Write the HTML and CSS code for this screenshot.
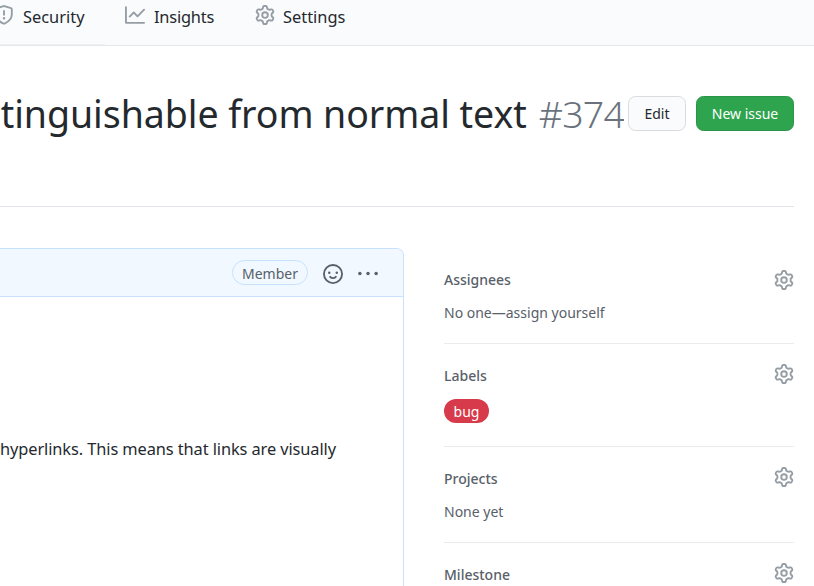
FILE: index.html
```html
<!DOCTYPE html>
<html lang="en">
<head>
<meta charset="utf-8">
<title>Issue #374</title>
<link rel="stylesheet" href="styles.css">
</head>
<body>
<svg class="defs" aria-hidden="true">
  <symbol id="gear" viewBox="0 0 16 16"><path fill-rule="evenodd" d="M7.429 1.525a6.593 6.593 0 011.142 0c.036.003.108.036.137.146l.289 1.105c.147.56.55.967.997 1.189.174.086.341.183.501.29.417.278.97.423 1.53.27l1.102-.303c.11-.03.175.016.195.046.219.31.41.641.573.989.014.031.022.11-.059.19l-.815.806c-.411.406-.562.957-.53 1.456a4.588 4.588 0 010 .582c-.032.499.119 1.05.53 1.456l.815.806c.08.08.073.159.059.19a6.494 6.494 0 01-.573.99c-.02.029-.086.074-.195.045l-1.103-.303c-.559-.153-1.112-.008-1.529.27-.16.107-.327.204-.5.29-.449.222-.851.628-.998 1.189l-.289 1.105c-.029.11-.101.143-.137.146a6.613 6.613 0 01-1.142 0c-.036-.003-.108-.037-.137-.146l-.289-1.105c-.147-.56-.55-.967-.997-1.189a4.502 4.502 0 01-.501-.29c-.417-.278-.97-.423-1.53-.27l-1.102.303c-.11.03-.175-.016-.195-.046a6.492 6.492 0 01-.573-.989c-.014-.031-.022-.11.059-.19l.815-.806c.411-.406.562-.957.53-1.456a4.587 4.587 0 010-.582c.032-.499-.119-1.05-.53-1.456l-.815-.806c-.08-.08-.073-.159-.059-.19a6.44 6.44 0 01.573-.99c.02-.029.086-.075.195-.045l1.103.303c.559.153 1.112.008 1.529-.27.16-.107.327-.204.5-.29.449-.222.851-.628.998-1.189l.289-1.105c.029-.11.101-.143.137-.146zM8 0c-.236 0-.47.01-.701.03-.743.065-1.29.615-1.458 1.261l-.29 1.106c-.017.066-.078.158-.211.224a5.994 5.994 0 00-.668.386c-.123.082-.233.09-.3.071L3.27 2.776c-.644-.177-1.392.02-1.82.63a7.977 7.977 0 00-.704 1.217c-.315.675-.111 1.422.363 1.891l.815.806c.05.048.098.147.088.294a6.084 6.084 0 000 .772c.01.147-.038.246-.088.294l-.815.806c-.474.469-.678 1.216-.363 1.891.2.428.436.835.704 1.218.428.609 1.176.806 1.82.63l1.103-.303c.066-.019.176-.011.299.071.213.143.436.272.668.386.133.066.194.158.212.224l.289 1.106c.169.646.715 1.196 1.458 1.26a8.094 8.094 0 001.402 0c.743-.064 1.29-.614 1.458-1.26l.29-1.106c.017-.066.078-.158.211-.224a5.98 5.98 0 00.668-.386c.123-.082.233-.09.3-.071l1.102.302c.644.177 1.392-.02 1.82-.63.268-.382.505-.789.704-1.217.315-.675.111-1.422-.364-1.891l-.814-.806c-.05-.048-.098-.147-.088-.294a6.1 6.1 0 000-.772c-.01-.147.039-.246.088-.294l.814-.806c.475-.469.679-1.216.364-1.891a7.992 7.992 0 00-.704-1.218c-.428-.609-1.176-.806-1.82-.63l-1.103.303c-.066.019-.176.011-.299-.071a5.991 5.991 0 00-.668-.386c-.133-.066-.194-.158-.212-.224L10.16 1.29C9.99.645 9.444.095 8.701.031A8.094 8.094 0 008 0zm1.5 8a1.5 1.5 0 11-3 0 1.5 1.5 0 013 0zM11 8a3 3 0 11-6 0 3 3 0 016 0z"/></symbol>
</svg>

<nav class="tabs">
  <a class="tab tab-first">
    <svg class="icon" viewBox="0 0 16 16"><path fill-rule="evenodd" d="M7.467.133a1.75 1.75 0 011.066 0l5.25 1.68A1.75 1.75 0 0115 3.48V7c0 1.566-.32 3.182-1.303 4.682-.983 1.498-2.585 2.813-5.032 3.855a1.7 1.7 0 01-1.33 0c-2.447-1.042-4.049-2.357-5.032-3.855C1.32 10.182 1 8.566 1 7V3.48a1.75 1.75 0 011.217-1.667l5.25-1.68zm.61 1.429a.25.25 0 00-.153 0l-5.25 1.68a.25.25 0 00-.174.238V7c0 1.358.275 2.666 1.057 3.86.784 1.194 2.121 2.34 4.366 3.297a.2.2 0 00.154 0c2.245-.956 3.582-2.104 4.366-3.298C13.225 9.666 13.5 8.36 13.5 7V3.48a.25.25 0 00-.174-.237l-5.25-1.68zM9 10.5a1 1 0 11-2 0 1 1 0 012 0zm-.25-5.75a.75.75 0 10-1.5 0v3a.75.75 0 001.5 0v-3z"/></svg>
    <span>Security</span>
  </a>
  <a class="tab tab-insights">
    <svg class="icon" viewBox="0 0 16 16"><path fill-rule="evenodd" d="M1.5 1.75a.75.75 0 00-1.5 0v12.5c0 .414.336.75.75.75h14.5a.75.75 0 000-1.5H1.5V1.75zm14.28 2.53a.75.75 0 00-1.06-1.06L10 7.94 7.53 5.47a.75.75 0 00-1.06 0L3.22 8.72a.75.75 0 001.06 1.06L7 7.06l2.47 2.47a.75.75 0 001.06 0l5.25-5.25z"/></svg>
    <span>Insights</span>
  </a>
  <a class="tab tab-settings">
    <svg class="icon"><use href="#gear"/></svg>
    <span>Settings</span>
  </a>
</nav>

<main>
  <header class="issue-header">
    <h1 class="title"><span class="title-text">stinguishable from normal text</span><span class="number">#374</span></h1>
    <button class="btn btn-edit">Edit</button>
    <button class="btn btn-new">New issue</button>
  </header>

  <div class="columns">
    <article class="comment">
      <div class="comment-header">
        <span class="role">Member</span>
        <svg class="icon smiley" viewBox="0 0 16 16"><path fill-rule="evenodd" d="M1.5 8a6.5 6.5 0 1113 0 6.5 6.5 0 01-13 0zM8 0a8 8 0 100 16A8 8 0 008 0zM5 8a1 1 0 100-2 1 1 0 000 2zm7-1a1 1 0 11-2 0 1 1 0 012 0zM5.32 9.636a.75.75 0 011.038.175l.007.009c.103.118.22.222.35.31.264.178.683.37 1.285.37.602 0 1.02-.192 1.285-.371.13-.088.247-.192.35-.31l.007-.008a.75.75 0 111.222.87c-.2.28-.45.5-.735.68-.63.418-1.37.638-2.127.629-.946 0-1.652-.308-2.126-.63a3.331 3.331 0 01-.715-.657.75.75 0 01.183-1.044z"/></svg>
        <svg class="icon dots" viewBox="0 0 16 16"><circle cx="1.5" cy="7.5" r="1.4"/><circle cx="8" cy="7.5" r="1.4"/><circle cx="14.5" cy="7.5" r="1.4"/></svg>
      </div>
      <p class="comment-body">hyperlinks. This means that links are visually</p>
    </article>

    <aside class="sidebar">
      <section class="item assignees">
        <h2><span>Assignees</span><svg class="icon"><use href="#gear"/></svg></h2>
        <p>No one—assign yourself</p>
      </section>
      <section class="item labels">
        <h2><span>Labels</span><svg class="icon"><use href="#gear"/></svg></h2>
        <span class="label">bug</span>
      </section>
      <section class="item projects">
        <h2><span>Projects</span><svg class="icon"><use href="#gear"/></svg></h2>
        <p>None yet</p>
      </section>
      <section class="item milestone">
        <h2><span>Milestone</span><svg class="icon"><use href="#gear"/></svg></h2>
      </section>
    </aside>
  </div>
</main>
</body>
</html>
```
FILE: styles.css
```css
* { box-sizing: border-box; }
html, body { height: 100%; }
body {
  margin: 0;
  overflow: hidden;
  background: #fff;
  color: #24292e;
  font-family: "Noto Sans", "Open Sans", sans-serif;
}
h1, h2, p { margin: 0; font-weight: 400; }
.defs { display: none; }
.icon { display: block; flex: none; width: 20px; height: 20px; fill: #959da5; }

.tabs {
  display: flex;
  height: 46px;
  padding: 5px 0 0;
  margin-left: -6px;
  background: #fafbfc;
  border-bottom: 1px solid #e4e7eb;
  font-size: 16.4px;
  line-height: 24px;
}
.tab { display: flex; gap: 9px; height: 40px; white-space: nowrap; }
.tab-first { width: 111px; border-bottom: 1px solid #eef0f2; }
.tab-insights { width: 110px; margin-left: 20px; letter-spacing: -0.2px; }
.tab-settings { margin-left: 20px; gap: 8px; letter-spacing: 0; }

.issue-header {
  display: flex;
  height: 161px;
  padding-top: 50px;
  margin-right: 20px;
  border-bottom: 1px solid #e1e4e8;
}
.title {
  display: flex;
  justify-content: flex-end;
  flex: none;
  width: 624px;
  height: 60px;
  margin: -12px 4px 0 0;
  gap: 12px;
  overflow: hidden;
  font-size: 37.5px;
  line-height: 60px;
  white-space: nowrap;
}
.title-text { letter-spacing: -0.05px; }
.number { font-weight: 300; color: #6a737d; letter-spacing: -0.8px; }
.btn {
  height: 35px;
  padding: 0;
  border: 1px solid #d9dbde;
  border-radius: 7.5px;
  font: 14px/33px "Noto Sans", sans-serif;
}
.btn-edit { width: 58px; background: #fafbfc; color: #24292e; }
.btn-new { width: 98px; margin-left: 10px; background: #2ea44f; border-color: #2a9548; color: #fff; }

.columns { display: flex; gap: 40px; height: 379px; padding-top: 41px; }
.comment {
  width: 404px;
  height: 360px;
  border: 1px solid #c8e1ff;
  border-left: 0;
  border-bottom: 0;
  border-top-right-radius: 7.5px;
  overflow: hidden;
}
.comment-header {
  display: flex;
  align-items: center;
  justify-content: flex-end;
  height: 48px;
  padding-right: 25px;
  background: #f1f8ff;
  border-bottom: 1px solid #c8e1ff;
}
.role {
  width: 76px;
  height: 25px;
  border: 1px solid #c8e1ff;
  border-radius: 13px;
  color: #586069;
  font-size: 14px;
  line-height: 25px;
  text-align: center;
}
.comment-header .icon { fill: #586069; margin-top: 2px; }
.smiley { margin-left: 15px; }
.dots { margin-left: 15px; }
.comment-body {
  padding-top: 139px;
  font-size: 16.4px;
  line-height: 26px;
  letter-spacing: -0.1px;
  white-space: nowrap;
}

.sidebar { width: 350px; color: #586069; font-size: 14px; }
.item { padding-top: 21px; border-bottom: 1px solid #eaecef; line-height: 22px; }
.item h2 { display: flex; justify-content: space-between; height: 22px; font-size: 14px; font-weight: 500; }
.item h2 .icon { margin-top: -1px; }
.item.assignees h2 .icon { margin-top: 1px; }
.assignees { height: 96px; }
.labels { height: 103px; }
.projects { height: 96px; }
.milestone { border: 0; }
.item p { margin-top: 11px; }
.label {
  display: block;
  width: 45px;
  height: 24px;
  margin-top: 12px;
  border-radius: 12px;
  background: #d73a4a;
  color: #fff;
  line-height: 25px;
  text-align: center;
}
```
